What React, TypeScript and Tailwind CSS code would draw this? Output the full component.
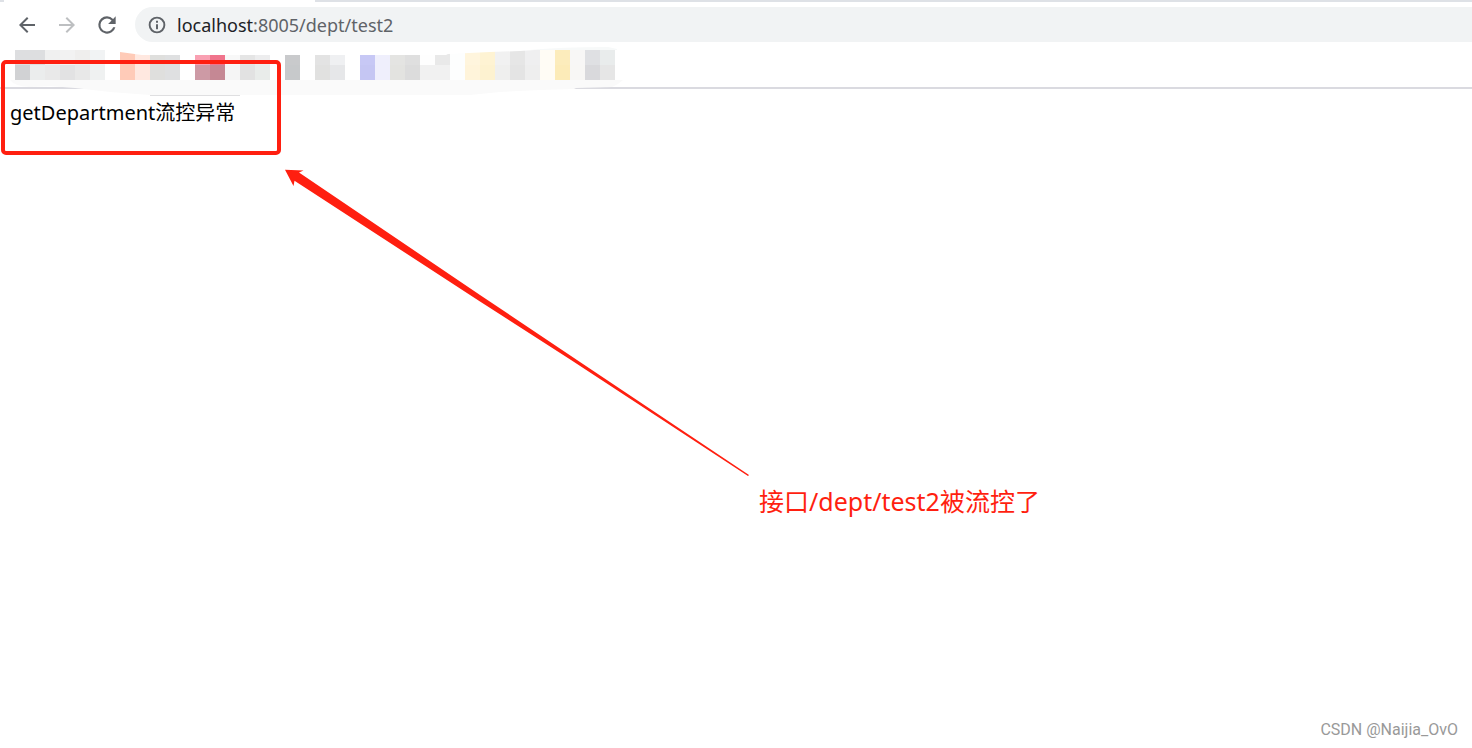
import type { ReactNode } from 'react'

/* ------------------------------------------------------------------ */
/*  Toolbar icons                                                      */
/* ------------------------------------------------------------------ */

const icons = {
  back: (
    <svg width="24" height="24" viewBox="0 0 24 24" fill="currentColor">
      <path d="M20 11H7.83l5.59-5.59L12 4l-8 8 8 8 1.41-1.41L7.83 13H20v-2z" />
    </svg>
  ),
  forward: (
    <svg width="24" height="24" viewBox="0 0 24 24" fill="currentColor">
      <path d="M12 4l-1.41 1.41L16.17 11H4v2h12.17l-5.58 5.59L12 20l8-8z" />
    </svg>
  ),
  reload: (
    <svg width="26" height="26" viewBox="0 0 24 24" fill="currentColor" className="shrink-0">
      <path d="M17.65 6.35A7.958 7.958 0 0 0 12 4a8 8 0 1 0 7.73 10h-2.08A6 6 0 1 1 12 6c1.66 0 3.14.69 4.22 1.78L13 11h7V4l-2.35 2.35z" />
    </svg>
  ),
  info: (
    <svg width="20" height="20" viewBox="0 0 24 24" fill="currentColor">
      <path d="M10.800 6.800h2.400v2.400h-2.400zm0 4.200h2.400v6h-2.400zm1.200-9a10 10 0 1 0 0 20 10 10 0 0 0 0-20zm0 17.700a7.700 7.700 0 1 1 0-15.400 7.700 7.700 0 0 1 0 15.400z" />
    </svg>
  ),
}

/* ------------------------------------------------------------------ */
/*  Pixelated bookmarks: [x, top colour, bottom colour]                */
/* ------------------------------------------------------------------ */

const CELL = 15

const cells: [number, string, string][] = [
  [15, '#dddee0', '#d1d2d4'],
  [30, '#dddee0', '#ebeded'],
  [45, '#f0f0f0', '#e9e9e9'],
  [60, '#f2f2f2', '#e2e2e3'],
  [75, '#efeeed', '#e8e8e8'],
  [90, '#f1f3f4', '#eff1f1'],
  [120, '#ffcbb8', '#ffcbb8'],
  [135, '#ffe8e0', '#ffe8e0'],
  [150, '#dfdfdd', '#dfdfdd'],
  [165, '#dfe0e1', '#dfe0e1'],
  [195, '#f9a0b2', '#cd9aa5'],
  [210, '#f0748c', '#c58894'],
  [225, '#f8f8f8', '#f5f5f5'],
  [240, '#e5e5e5', '#e2e2e2'],
  [255, '#ededee', '#e9ecea'],
  [285, '#c9cacc', '#c7c9cb'],
  [315, '#e3e3e3', '#e1e1e0'],
  [330, '#eff0f2', '#e6e7e9'],
  [360, '#c7c8f5', '#c5c6f3'],
  [375, '#efeffc', '#efeffc'],
  [390, '#e4e4e2', '#e3e3e0'],
  [405, '#dfdfdf', '#dcdcdc'],
  [420, '#fefefe', '#f1f1f1'],
  [435, '#e9e9e9', '#f1f1f1'],
  [450, '#fdfefe', '#fdfefe'],
  [465, '#fff5dd', '#fff4da'],
  [480, '#fef3d3', '#fdf2d0'],
  [495, '#f1f1f1', '#efefee'],
  [510, '#e6e6e6', '#e4e4e4'],
  [525, '#efeff0', '#eeeeee'],
  [540, '#fffcf5', '#fffcf5'],
  [555, '#fcecbc', '#fcebb8'],
  [570, '#f8f7f6', '#f8f7f5'],
  [585, '#dfe0e3', '#d9d9dc'],
  [600, '#e9ecec', '#e6e6e6'],
]

function Bookmarks() {
  return (
    <svg className="absolute left-0 top-0" width="640" height="100" viewBox="0 0 640 100" aria-hidden="true">
      <defs>
        <clipPath id="brush">
          <path d="M10 50H105V52L120 52L142 55H446L448 54L490 52L520 51L535 50H615V80H10z" />
        </clipPath>
      </defs>
      {/* Brush stroke that wipes part of the divider */}
      <path d="M10 80H623Q618 85 612 87L576 88L574 89L540 90L500 92L470 95H150L110 92L75 88L50 86L30 87Q14 86 10 80z" fill="#fafafa" />
      <path d="M530 50Q560 47 608 47L617 49V50z" fill="#f7f9f9" />
      <rect x="150" y="95" width="90" height="1" fill="#dfdfe1" />
      <g clipPath="url(#brush)" shapeRendering="crispEdges">
        {cells.map(([x, top, bottom]) => (
          <g key={x}>
            <rect x={x} y={50} width={CELL} height={CELL} fill={top} />
            <rect x={x} y={65} width={CELL} height={CELL} fill={bottom} />
          </g>
        ))}
      </g>
    </svg>
  )
}

/* ------------------------------------------------------------------ */
/*  Toolbar                                                            */
/* ------------------------------------------------------------------ */

function ToolButton({ label, disabled, children }: { label: string; disabled?: boolean; children: ReactNode }) {
  return (
    <button
      type="button"
      aria-label={label}
      disabled={disabled}
      className="flex size-6 items-center justify-center text-[#5f6368] disabled:text-[#bdbfc1]"
    >
      {children}
    </button>
  )
}

function Toolbar() {
  return (
    <header>
      {/* Bottom edge of the tab strip */}
      <div className="flex h-[2px] bg-[#dee1e6]">
        <div className="ml-1 w-[311px] bg-white" />
      </div>
      <div className="flex h-[45px] items-center pl-[15px]">
        <nav className="flex gap-4">
          <ToolButton label="Back">{icons.back}</ToolButton>
          <ToolButton label="Forward" disabled>{icons.forward}</ToolButton>
          <ToolButton label="Reload">{icons.reload}</ToolButton>
        </nav>
        <div className="ml-4 flex h-[35px] flex-1 items-center gap-[10px] rounded-l-full bg-[#f1f3f4] pl-3 text-[#5f6368]">
          {icons.info}
          <a href="#test2" className="text-[18px] leading-6">
            <span className="text-[#202124]">localhost</span>:8005/dept/test2
          </a>
        </div>
      </div>
      <div className="h-[42px] border-b-2 border-[#dadae0]" />
    </header>
  )
}

/* ------------------------------------------------------------------ */
/*  Page                                                               */
/* ------------------------------------------------------------------ */

export default function App() {
  return (
    <div className="relative flex min-h-screen flex-col overflow-hidden bg-white font-['Noto_Sans','Noto_Sans_CJK_SC',sans-serif]">
      <Toolbar />
      <Bookmarks />

      <main className="relative flex-1 px-[10px] pt-[10px]">
        <p className="text-[20px] leading-7 text-black">getDepartment流控异常</p>
      </main>

      {/* Annotations */}
      <div className="absolute left-px top-[60px] h-[95px] w-[280px] rounded-[5px] border-4 border-[#ff1f10]" />
      <svg className="absolute left-[280px] top-[165px]" width="480" height="320" viewBox="280 165 480 320" aria-hidden="true">
        <path d="M285 169.700L303.500 170.500L299 172.500L480 295L577 360L749 475L748 476L571 360L480 301.500L294.500 180.700L293.500 186z" fill="#ff1f10" />
      </svg>
      <p className="absolute left-[759px] top-[483px] text-[25px] leading-9 text-[#ff1f10]">接口/dept/test2被流控了</p>
      <footer className="absolute bottom-2 right-[14px] font-['Roboto',sans-serif] text-[16px] leading-5 text-[#999999]">
        CSDN @Naijia_OvO
      </footer>
    </div>
  )
}
